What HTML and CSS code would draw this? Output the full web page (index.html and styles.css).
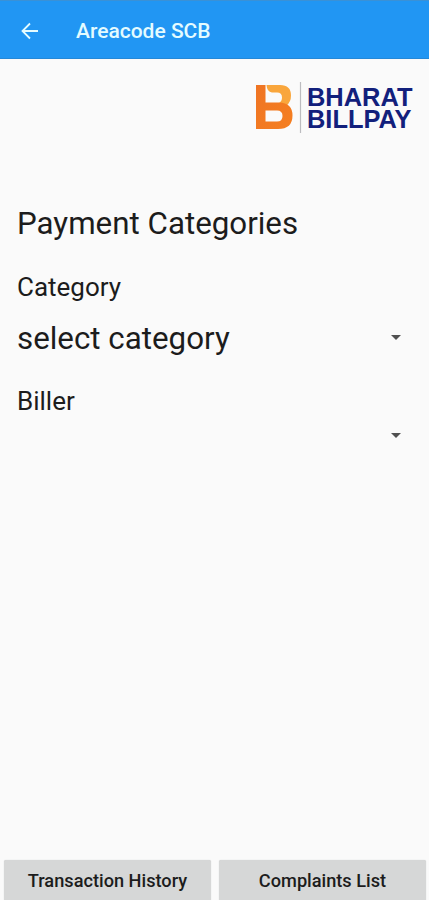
FILE: index.html
```html
<!DOCTYPE html>
<html lang="en">
<head>
<meta charset="utf-8">
<title>Areacode SCB</title>
<link rel="stylesheet" href="styles.css">
</head>
<body>
<header class="app-bar">
  <svg class="back" viewBox="0 0 18 18" aria-label="Back"><path d="M17 9H2M9 1.500 1.500 9 9 16.500"/></svg>
  <h1 class="app-title">Areacode SCB</h1>
</header>
<main class="content">
  <svg class="logo" viewBox="0 0 160 54" aria-label="Bharat BillPay">
    <defs>
      <linearGradient id="orange" x1="0" y1="0" x2="1" y2="1"><stop offset="0" stop-color="#ef7423"/><stop offset="1" stop-color="#f57f20"/></linearGradient>
    </defs>
    <path fill="#f9a63c" d="M11.500 4H25Q36 4 36 14.500Q36 21 31.500 24.500L24 22Q27 20 27 16.500Q27 11.500 22 11.500H17Q12 11 11.500 4Z"/>
    <path fill="url(#orange)" fill-rule="evenodd" d="M1 4H10.500V21.500H24Q37.500 22 37.500 34.500Q37.500 48 23 48H1ZM10.500 29.500V40.500H22Q27.500 40.500 27.500 35Q27.500 29.500 22 29.500Z"/>
    <path class="logo-rule" d="M45.500 1V52"/>
    <text class="logo-text" x="52" y="24.500" textLength="105.500" lengthAdjust="spacingAndGlyphs">BHARAT</text>
    <text class="logo-text" x="52" y="46.500" textLength="104.500" lengthAdjust="spacingAndGlyphs">BILLPAY</text>
  </svg>
  <h2 class="heading">Payment Categories</h2>
  <div class="label category-label">Category</div>
  <div class="spinner">
    <span class="value">select category</span>
    <svg class="caret" viewBox="0 0 10 5"><path d="M0 0H10L5 5Z"/></svg>
  </div>
  <div class="label biller-label">Biller</div>
  <div class="spinner biller-spinner">
    <svg class="caret" viewBox="0 0 10 5"><path d="M0 0H10L5 5Z"/></svg>
  </div>
</main>
<footer class="actions">
  <button class="action">Transaction History</button>
  <button class="action">Complaints List</button>
</footer>
</body>
</html>
```
FILE: styles.css
```css
* { box-sizing: border-box; }
body {
  margin: 0;
  height: 900px;
  overflow: hidden;
  display: flex;
  flex-direction: column;
  background: #fafafa;
  color: #1c1c1c;
  font-family: Roboto, "Liberation Sans", sans-serif;
}
.app-bar {
  height: 59px;
  flex: none;
  display: flex;
  align-items: center;
  padding: 2px 0 0 21px;
  background: #2196f3;
  border-top: 1px solid #3a91d6;
  border-bottom: 1px solid #2488d8;
}
.back {
  width: 18px;
  height: 18px;
  fill: none;
  stroke: #e4fbff;
  stroke-width: 1.8;
}
.app-title {
  margin: 0 0 0 37px;
  font-size: 21px;
  line-height: 28px;
  font-weight: 500;
  color: #e4fbff;
}
.content {
  flex: 1;
  display: flex;
  flex-direction: column;
  padding: 22px 14px 0 17px;
}
.logo {
  width: 160px;
  height: 54px;
  align-self: flex-end;
}
.logo-rule { stroke: #bcbcc0; stroke-width: 1.2; }
.logo-text {
  font: bold 26px "Liberation Sans", sans-serif;
  fill: #12207c;
}
.heading {
  margin: 69px 0 0;
  font-size: 31.3px;
  line-height: 40px;
  font-weight: 400;
}
.label { font-size: 26px; line-height: 32px; }
.category-label { margin-top: 27px; }
.spinner {
  height: 40px;
  margin-top: 14px;
  display: flex;
  align-items: center;
  justify-content: space-between;
  padding-right: 14px;
}
.value { font-size: 31.3px; line-height: 40px; padding-top: 3px; }
.caret { width: 10px; height: 5px; fill: #505050; margin-left: auto; }
.biller-label { margin-top: 28px; }
.biller-spinner { margin-top: -2px; }
.actions {
  flex: none;
  height: 40px;
  display: grid;
  grid-template-columns: 207px 207px;
  gap: 8px;
  padding-left: 4px;
}
.action {
  border: 0;
  border-radius: 2px 2px 0 0;
  background: #d6d7d7;
  box-shadow: 0 0 1px #c4c5c5;
  font: 500 18.2px/24px Roboto, sans-serif;
  color: #1c1c1c;
  padding: 2px 0 0;
}
```
